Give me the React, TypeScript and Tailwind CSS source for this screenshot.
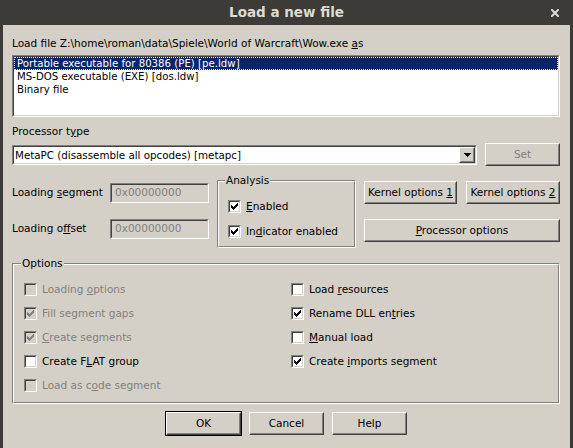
import React from "react";

type P = { className?: string; innerClass?: string; children?: React.ReactNode };

function Sunken({ className = "", innerClass = "", children }: P) {
  return (
    <div className={`border border-t-[#808080] border-l-[#808080] border-b-white border-r-white ${className}`}>
      <div className={`h-full border border-t-[#404040] border-l-[#404040] border-b-[#d4d0c8] border-r-[#d4d0c8] ${innerClass}`}>
        {children}
      </div>
    </div>
  );
}

function Raised({ className = "", innerClass = "", children }: P) {
  return (
    <div className={`border border-t-white border-l-white border-b-[#404040] border-r-[#404040] ${className}`}>
      <div className={`h-full border border-t-[#d4d0c8] border-l-[#d4d0c8] border-b-[#808080] border-r-[#808080] flex items-center justify-center ${innerClass}`}>
        <span className="whitespace-nowrap">{children}</span>
      </div>
    </div>
  );
}

function Etched({ className = "", innerClass = "", children }: P) {
  return (
    <div className={`relative border border-t-[#808080] border-l-[#808080] border-b-white border-r-white ${className}`}>
      <div className={`h-full border border-t-white border-l-white border-b-[#808080] border-r-[#808080] ${innerClass}`}>
        {children}
      </div>
    </div>
  );
}

function CheckMark({ color }: { color: string }) {
  const cols = [
    [1, 3],
    [2, 4],
    [3, 5],
    [4, 4],
    [5, 3],
    [6, 2],
    [7, 1],
  ];
  return (
    <svg width="9" height="9" viewBox="0 0 9 9" shapeRendering="crispEdges" className="block">
      {cols.map(([x, y]) => (
        <rect key={x} x={x} y={y} width="1" height="3" fill={color} />
      ))}
    </svg>
  );
}

function Check({ checked = false, disabled = false }: { checked?: boolean; disabled?: boolean }) {
  return (
    <div className="w-[13px] h-[13px] shrink-0 border border-t-[#808080] border-l-[#808080] border-b-white border-r-white">
      <div
        className={`w-full h-full border border-t-[#404040] border-l-[#404040] border-b-[#d4d0c8] border-r-[#d4d0c8] ${
          disabled ? "bg-[#d4d0c8]" : "bg-white"
        }`}
      >
        {checked && <CheckMark color={disabled ? "#808080" : "#000000"} />}
      </div>
    </div>
  );
}

function CheckRow({
  checked,
  disabled,
  children,
}: {
  checked?: boolean;
  disabled?: boolean;
  children: React.ReactNode;
}) {
  return (
    <div className="h-[16px] flex items-center gap-[5px]">
      <Check checked={checked} disabled={disabled} />
      <span className={`leading-[16px] whitespace-nowrap ${disabled ? "text-[#808080]" : "text-black"}`}>{children}</span>
    </div>
  );
}

export default function App() {
  return (
    <div className="w-[573px] h-[448px] bg-[#3c3b37] flex flex-col overflow-hidden font-['DejaVu_Sans',sans-serif] text-[10.5px] text-black">
      {/* Title bar */}
      <div className="h-[25px] shrink-0 grid grid-cols-[1fr_auto_1fr] items-center">
        <div />
        <div className="text-[13.5px] font-bold text-[#dfdbd2] leading-none">Load a new file</div>
        <div className="flex justify-end pr-[14px]">
          <svg width="8" height="8" viewBox="0 0 8 8" className="block">
            <path d="M1 1 L7 7 M7 1 L1 7" stroke="#dfdbd2" strokeWidth="2" strokeLinecap="square" />
          </svg>
        </div>
      </div>

      {/* Body */}
      <div className="flex-1 mx-[3px] bg-[#d4d0c8] pl-[9px] pr-[10px] pt-[11px] flex flex-col">
        <div className="h-[14px] leading-[14px] whitespace-nowrap">
          {"Load file Z:\\home\\roman\\data\\Spiele\\World of Warcraft\\Wow.exe "}
          <u>a</u>s
        </div>

        <Sunken className="mt-[5px] h-[62px]" innerClass="bg-white">
          <div className="leading-[13px] whitespace-nowrap text-[10.2px]">
            <div className="h-[13px] leading-[11px] bg-[#0a246a] text-white border border-dotted border-[#f0f0c0] pl-[2px]">
              Portable executable for 80386 (PE) [pe.ldw]
            </div>
            <div className="h-[13px] pl-[3px]">MS-DOS executable (EXE) [dos.ldw]</div>
            <div className="h-[13px] pl-[3px]">Binary file</div>
          </div>
        </Sunken>

        <div className="mt-[7px] h-[14px] leading-[14px]">
          Processor t<u>y</u>pe
        </div>

        <div className="mt-[5px] h-[23px] flex items-center">
          <Sunken className="w-[465px] h-[20px]" innerClass="bg-white flex items-center">
            <span className="flex-1 pl-[1px] leading-[16px] whitespace-nowrap text-[10.3px]">
              MetaPC (disassemble all opcodes) [metapc]
            </span>
            <div className="w-[16px] h-[16px] border border-t-white border-l-white border-b-[#404040] border-r-[#404040]">
              <div className="h-full border border-t-[#d4d0c8] border-l-[#d4d0c8] border-b-[#808080] border-r-[#808080] bg-[#d4d0c8] flex items-center justify-center">
                <svg width="7" height="4" viewBox="0 0 7 4" shapeRendering="crispEdges" className="block">
                  <path d="M0 0 H7 V1 H6 V2 H5 V3 H4 V4 H3 V3 H2 V2 H1 V1 H0 Z" fill="#000" />
                </svg>
              </div>
            </div>
          </Sunken>
          <Raised className="ml-[8px] w-[75px] h-[23px]" innerClass="text-[#808080]">
            Set
          </Raised>
        </div>

        {/* Middle row */}
        <div className="mt-[14px] h-[68px] flex">
          <div className="w-[197px] flex flex-col pt-[3px] gap-[16px]">
            <div className="h-[20px] flex items-center">
              <span className="w-[98px] whitespace-nowrap">
                Loading <u>s</u>egment
              </span>
              <Sunken className="w-[99px] h-[20px]" innerClass="flex items-center pl-[3px] text-[#808080]">
                0x00000000
              </Sunken>
            </div>
            <div className="h-[20px] flex items-center">
              <span className="w-[98px] whitespace-nowrap">
                Loading o<u>f</u>fset
              </span>
              <Sunken className="w-[99px] h-[20px]" innerClass="flex items-center pl-[3px] text-[#808080]">
                0x00000000
              </Sunken>
            </div>
          </div>

          <Etched className="ml-[8px] w-[139px] h-[68px]" innerClass="pl-[9px] pt-[16px] flex flex-col gap-[9px]">
            <span className="absolute left-[7px] -top-[7px] px-[1px] leading-[13px] bg-[#d4d0c8]">Analysis</span>
            <CheckRow checked>
              <u>E</u>nabled
            </CheckRow>
            <CheckRow checked>
              In<u>d</u>icator enabled
            </CheckRow>
          </Etched>

          <div className="ml-[8px] flex-1 flex flex-col pt-[1px]">
            <div className="flex gap-[9px]">
              <Raised className="w-[93px] h-[23px]">
                Kernel options <u>1</u>
              </Raised>
              <Raised className="w-[94px] h-[23px]">
                Kernel options <u>2</u>
              </Raised>
            </div>
            <Raised className="mt-[15px] w-full h-[23px]">
              <u>P</u>rocessor options
            </Raised>
          </div>
        </div>

        {/* Options group */}
        <Etched className="mt-[15px] h-[141px]" innerClass="pl-[10px] pt-[16px] flex">
          <span className="absolute left-[8px] -top-[7px] px-[1px] leading-[13px] bg-[#d4d0c8]">Options</span>
          <div className="w-[267px] flex flex-col gap-[8px]">
            <CheckRow disabled>
              Loading <u>o</u>ptions
            </CheckRow>
            <CheckRow checked disabled>
              Fill segment <u>g</u>aps
            </CheckRow>
            <CheckRow checked disabled>
              <u>C</u>reate segments
            </CheckRow>
            <CheckRow>
              Create F<u>L</u>AT group
            </CheckRow>
            <CheckRow disabled>
              Load as c<u>o</u>de segment
            </CheckRow>
          </div>
          <div className="flex flex-col gap-[8px]">
            <CheckRow>
              Load <u>r</u>esources
            </CheckRow>
            <CheckRow checked>
              Rename DLL en<u>t</u>ries
            </CheckRow>
            <CheckRow>
              <u>M</u>anual load
            </CheckRow>
            <CheckRow checked>
              Create <u>i</u>mports segment
            </CheckRow>
          </div>
        </Etched>

        {/* Buttons */}
        <div className="mt-[7px] flex justify-center items-center">
          <div className="w-[77px] h-[25px] border border-black">
            <Raised className="w-full h-full">OK</Raised>
          </div>
          <Raised className="ml-[7px] w-[75px] h-[23px]">Cancel</Raised>
          <Raised className="ml-[8px] w-[75px] h-[23px]">Help</Raised>
        </div>
      </div>
    </div>
  );
}
